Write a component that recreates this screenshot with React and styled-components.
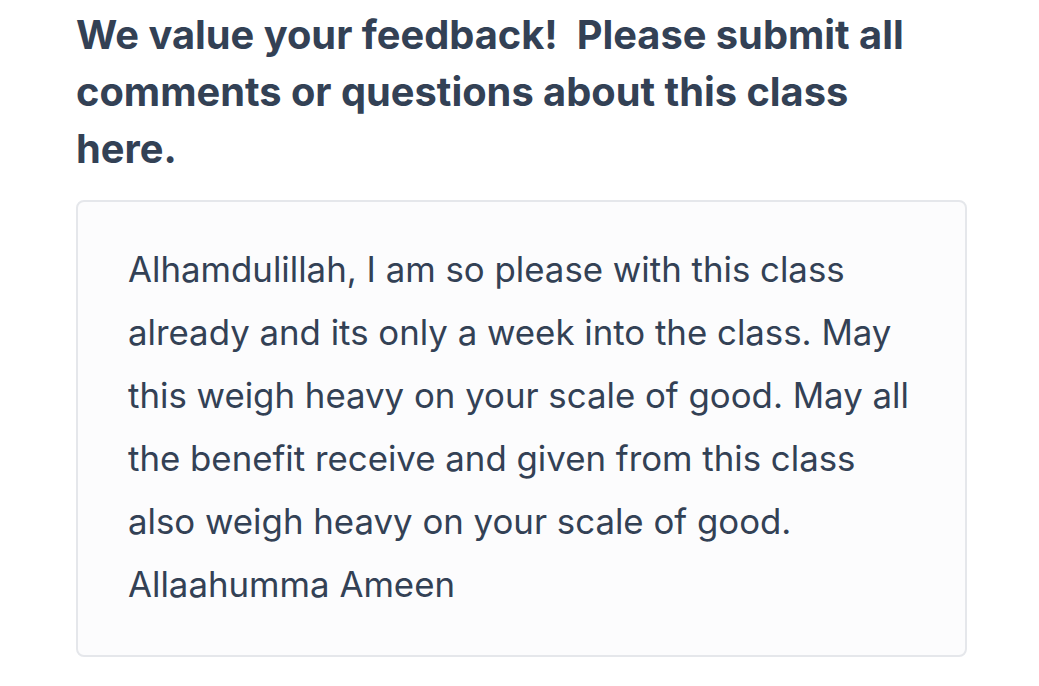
import styled, { createGlobalStyle } from "styled-components";

const GlobalStyle = createGlobalStyle`
  body {
    margin: 0;
    background: #ffffff;
    font-family: "Inter", "Noto Sans", sans-serif;
  }
`;

export default function App() {
  return (
    <Page>
      <GlobalStyle />
      <Heading>
        We value your feedback!&nbsp; Please submit all comments or questions
        about this class here.
      </Heading>
      <Card>
        <Comment>
          Alhamdulillah, I am so please with this class already and its only a
          week into the class. May this weigh heavy on your scale of good. May
          all the benefit receive and given from this class also weigh heavy on
          your scale of good. Allaahumma Ameen
        </Comment>
      </Card>
    </Page>
  );
}

const Page = styled.div`
  width: 891px;
  padding: 6px 0 0 76px;
`;

const Heading = styled.h2`
  max-width: 860px;
  margin: 0 0 23px;
  font-size: 39.8px;
  line-height: 57px;
  font-weight: 700;
  color: #334155;
`;

const Card = styled.div`
  background: #fcfcfd;
  border: 2px solid #e5e7eb;
  border-radius: 8px;
  padding: 36px 50px 39px;
`;

const Comment = styled.p`
  margin: 0;
  font-size: 34.8px;
  line-height: 63px;
  color: #334155;
`;
